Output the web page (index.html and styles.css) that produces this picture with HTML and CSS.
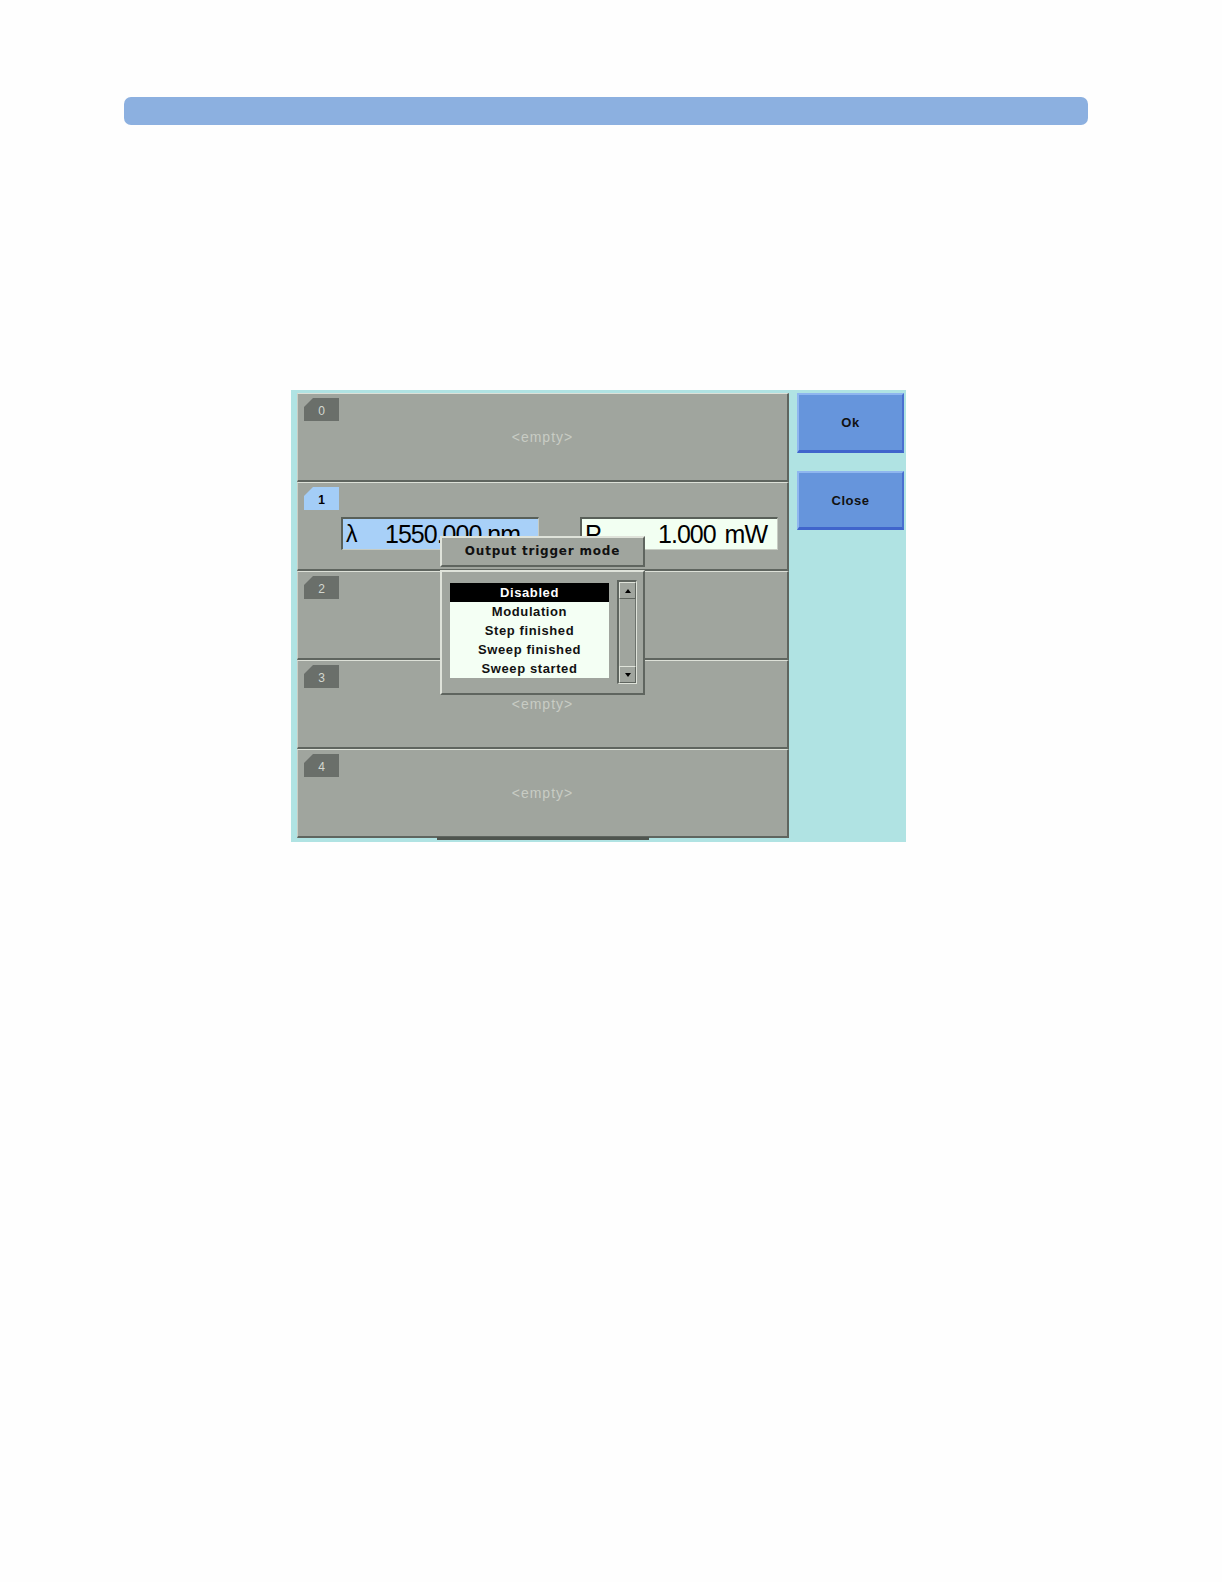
FILE: index.html
```html
<!DOCTYPE html>
<html lang="en">
<head>
  <meta charset="UTF-8">
  <title>Output trigger mode</title>
  <link rel="stylesheet" href="styles.css">
</head>
<body>
  <div class="top-bar"></div>

  <div class="screen">
    <div class="slots">
      <div class="slot">
        <div class="slot-tab">0</div>
        <div class="slot-empty">&lt;empty&gt;</div>
      </div>
      <div class="slot">
        <div class="slot-tab active">1</div>
        <div class="slot-fields">
          <div class="field wavelength">
            <span class="field-label">&lambda;</span>
            <span class="field-value">1550.000 nm</span>
          </div>
          <div class="field power">
            <span class="field-label">P</span>
            <span class="field-value">1.000 mW</span>
          </div>
        </div>
      </div>
      <div class="slot">
        <div class="slot-tab">2</div>
      </div>
      <div class="slot">
        <div class="slot-tab">3</div>
        <div class="slot-empty">&lt;empty&gt;</div>
      </div>
      <div class="slot">
        <div class="slot-tab">4</div>
        <div class="slot-empty">&lt;empty&gt;</div>
      </div>

      <div id="trigger-popup">
        <div class="popup-title">Output trigger mode</div>
        <div class="popup-body">
          <ul class="popup-list">
            <li class="selected">Disabled</li>
            <li>Modulation</li>
            <li>Step finished</li>
            <li>Sweep finished</li>
            <li>Sweep started</li>
          </ul>
          <div class="scrollbar">
            <div class="scroll-btn"><span class="arrow-up"></span></div>
            <div class="scroll-track"></div>
            <div class="scroll-btn"><span class="arrow-down"></span></div>
          </div>
        </div>
      </div>
    </div>

    <div class="side-buttons">
      <button class="soft-btn ok-btn">Ok</button>
      <button class="soft-btn">Close</button>
    </div>
  </div>
</body>
</html>
```

FILE: styles.css
```css
body {
  margin: 0;
  background-color: #fefefe;
  font-family: "Liberation Sans", Arial, sans-serif;
}

.top-bar {
  margin: 97px 0 0 124px;
  width: 964px;
  height: 28px;
  border-radius: 7px;
  background-color: #8cb0e0;
}

.screen {
  margin: 265px 0 0 291px;
  width: 615px;
  height: 452px;
  box-sizing: border-box;
  padding: 3px 0 4px 6px;
  display: flex;
  background-color: #b0e3e3;
}

.slots {
  position: relative;
  width: 492px;
  display: flex;
  flex-direction: column;
}

.slot {
  height: 89px;
  box-sizing: border-box;
  padding: 4px 0 0 6px;
  background-color: #a0a59e;
  border-top: 1px solid #dde1d8;
  border-left: 1px solid #c9cdc4;
  border-bottom: 2px solid #5f655f;
  border-right: 2px solid #5f655f;
}

.slot-tab {
  width: 35px;
  height: 23px;
  background-color: #6a6f6a;
  clip-path: polygon(9px 0, 100% 0, 100% 100%, 0 100%, 0 9px);
  color: #d4d8d0;
  font-size: 12px;
  line-height: 27px;
  text-align: center;
}

.slot-tab.active {
  background-color: #a3cdf7;
  color: #000;
  font-weight: bold;
}

.slot-empty {
  margin: 8px 0 0 -6px;
  text-align: center;
  color: #c8ccc4;
  font-size: 14px;
  letter-spacing: 1px;
}

.slot-fields {
  display: flex;
  gap: 41px;
  margin: 7px 0 0 37px;
}

.field {
  width: 198px;
  height: 33px;
  box-sizing: border-box;
  display: flex;
  justify-content: space-between;
  align-items: center;
  padding: 0 10px 0 3px;
  border-top: 2px solid #596059;
  border-left: 2px solid #596059;
  border-bottom: 1px solid #c6cbc2;
  border-right: 1px solid #c6cbc2;
  font-size: 25px;
  letter-spacing: -1px;
  color: #000;
}

.wavelength {
  background-color: #a8d0f8;
  padding-right: 18px;
}

.wavelength .field-label {
  font-size: 23px;
}

.power {
  background-color: #f2fff2;
}

.power .field-value {
  word-spacing: 3px;
}

#trigger-popup {
  position: absolute;
  left: 143px;
  top: 143px;
  width: 205px;
  display: flex;
  flex-direction: column;
  gap: 3px;
}

.popup-title,
.popup-body {
  box-sizing: border-box;
  background-color: #a0a59e;
  border-top: 2px solid #dfe3da;
  border-left: 2px solid #dfe3da;
  border-bottom: 2px solid #5f655f;
  border-right: 2px solid #5f655f;
}

.popup-title {
  height: 31px;
  text-align: center;
  font-family: "DejaVu Sans", sans-serif;
  font-weight: bold;
  font-size: 12px;
  letter-spacing: 0.8px;
  line-height: 27px;
  color: #111;
}

.popup-body {
  height: 125px;
  display: flex;
  align-items: flex-start;
  gap: 8px;
  padding: 8px 0 0 8px;
}

.popup-list {
  margin: 3px 0 0;
  padding: 0;
  list-style: none;
  width: 159px;
  background-color: #f4fff4;
}

.popup-list li {
  height: 19px;
  line-height: 19px;
  text-align: center;
  font-weight: bold;
  font-size: 13px;
  letter-spacing: 0.6px;
  color: #111;
}

.popup-list li.selected {
  background-color: #000;
  color: #fff;
}

.scrollbar {
  width: 20px;
  height: 104px;
  box-sizing: border-box;
  display: flex;
  flex-direction: column;
  border-top: 2px solid #5f655f;
  border-left: 2px solid #5f655f;
  border-bottom: 1px solid #dfe3da;
  border-right: 1px solid #dfe3da;
}

.scroll-btn {
  height: 17px;
  box-sizing: border-box;
  display: flex;
  align-items: center;
  justify-content: center;
  border-top: 1px solid #dfe3da;
  border-left: 1px solid #dfe3da;
  border-bottom: 1px solid #5f655f;
  border-right: 1px solid #5f655f;
}

.scroll-track {
  flex: 1;
  border-left: 1px solid #c8ccc4;
  border-right: 1px solid #6d736d;
}

.arrow-up,
.arrow-down {
  width: 0;
  height: 0;
  border-left: 3px solid transparent;
  border-right: 3px solid transparent;
}

.arrow-up {
  border-bottom: 4px solid #000;
}

.arrow-down {
  border-top: 4px solid #000;
}

.slots::after {
  content: "";
  position: absolute;
  left: 140px;
  bottom: -2px;
  width: 212px;
  height: 3px;
  background-color: #4f554f;
}

.side-buttons {
  display: flex;
  flex-direction: column;
  gap: 18px;
  padding-left: 8px;
}

.soft-btn {
  width: 107px;
  height: 59px;
  box-sizing: border-box;
  background-color: #6695dc;
  border-top: 2px solid #8fb6ef;
  border-left: 2px solid #8fb6ef;
  border-bottom: 3px solid #4065cc;
  border-right: 2px solid #4a6fd0;
  font-family: "Liberation Sans", Arial, sans-serif;
  font-weight: bold;
  font-size: 13px;
  letter-spacing: 0.5px;
  color: #111;
  padding: 0;
}

.ok-btn {
  height: 60px;
}
```
